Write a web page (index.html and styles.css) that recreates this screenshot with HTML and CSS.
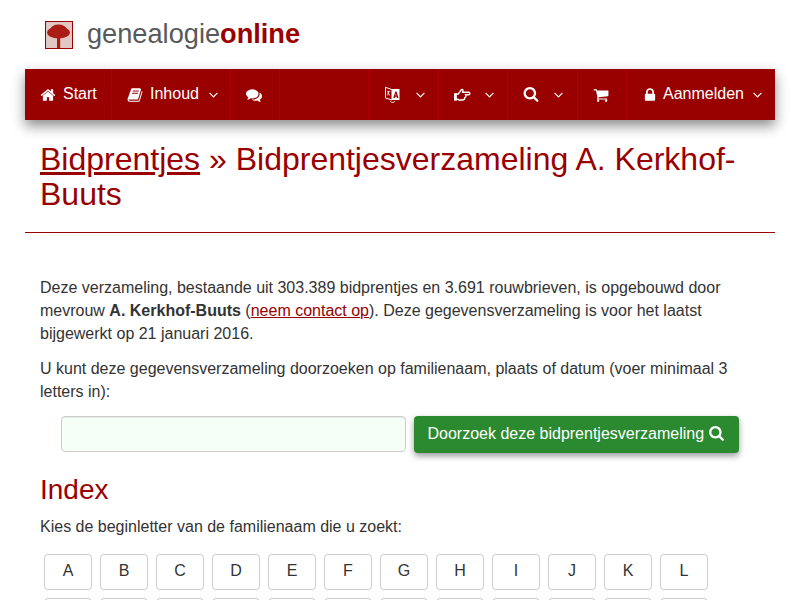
FILE: index.html
```html
<!DOCTYPE html>
<html lang="nl">
<head>
<meta charset="utf-8">
<title>Bidprentjes</title>
<link rel="stylesheet" href="styles.css">
</head>
<body>
<svg class="defs" width="0" height="0">
  <symbol id="i-search" viewBox="0 0 1664 1792"><path d="M1152 704q0-185-131.500-316.500t-316.500-131.500-316.500 131.500-131.500 316.500 131.500 316.500 316.500 131.500 316.500-131.500 131.500-316.500zm512 832q0 52-38 90t-90 38q-54 0-90-38l-343-342q-179 124-399 124-143 0-273.500-55.500t-225-150-150-225-55.500-273.500 55.500-273.500 150-225 225-150 273.500-55.500 273.500 55.500 225 150 150 225 55.500 273.500q0 220-124 399l343 343q37 37 37 90z"/></symbol>
  <symbol id="i-chev" viewBox="0 0 9 5.500"><path d="M.6.7 4.500 4.600 8.400.7" fill="none" stroke="currentColor" stroke-width="1.200"/></symbol>
</svg>
<div class="page">
  <header class="brand">
    <svg class="logo" viewBox="0 0 28 28" aria-hidden="true">
      <filter id="soft"><feGaussianBlur stdDeviation=".7"/></filter>
      <rect width="28" height="28" fill="#e2c8c4"/>
      <g fill="#ab1e14" filter="url(#soft)"><ellipse cx="13.500" cy="11.500" rx="11.500" ry="6"/><ellipse cx="13.500" cy="8.500" rx="8" ry="5"/><path d="M12 15h3.200v12H12z"/></g>
      <rect x=".5" y=".5" width="27" height="27" fill="none" stroke="#990000"/>
    </svg>
    <span class="brand-name">genealogie<b>online</b></span>
  </header>
  <nav class="nav">
    <a class="item w-start"><svg class="ic" viewBox="0 0 1792 1792"><path d="M1472 992v480q0 26-19 45t-45 19h-384v-384h-256v384h-384q-26 0-45-19t-19-45v-480q0-1 .5-3t.5-3l575-474 575 474q1 2 1 6zm223-69l-62 74q-8 9-21 11h-3q-13 0-21-7l-692-577-692 577q-12 8-24 7-13-2-21-11l-62-74q-8-10-7-23.500t11-21.500l719-599q32-26 76-26t76 26l244 204v-195q0-14 9-23t23-9h192q14 0 23 9t9 23v408l219 182q10 8 11 21.500t-7 23.500z"/></svg><span>Start</span></a>
    <a class="item w-inhoud"><svg class="ic" viewBox="0 0 1792 1792"><path d="M1703 478q40 57 18 129l-275 906q-19 64-76.500 107.500t-122.500 43.500h-923q-77 0-148.500-53.500t-99.500-131.500q-24-67-2-127 0-4 3-27t4-37q1-8-3-21.500t-3-19.500q2-11 8-21t16.500-23.500 16.500-23.500q23-38 45-91.500t30-91.500q3-10 .5-30t-.5-28q3-11 17-28t17-23q21-36 42-92t25-90q1-9-2.500-32t.5-28q4-13 22-30.500t22-22.500q19-26 42.500-84.500t27.500-96.500q1-8-3-25.500t-2-26.500q2-8 9-18t18-23 17-21q8-12 16.500-30.500t15-35 16-36 19.500-32 26.500-23.500 36-11.500 47.500 5.500l-1 3q38-9 51-9h761q74 0 114 56t18 130l-274 906q-36 119-71.500 153.500t-128.500 34.500h-869q-27 0-38 15-11 16-1 43 24 70 144 70h923q29 0 56-15.500t35-41.500l300-987q7-22 5-57 38 15 59 43zm-1064 2q-4 13 2 22.500t20 9.500h608q13 0 25.500-9.500t16.500-22.500l21-64q4-13-2-22.500t-20-9.500h-608q-13 0-25.500 9.500t-16.500 22.500zm-83 256q-4 13 2 22.500t20 9.500h608q13 0 25.500-9.500t16.500-22.500l21-64q4-13-2-22.500t-20-9.500h-608q-13 0-25.500 9.500t-16.500 22.500z"/></svg><span>Inhoud</span><svg class="chev"><use href="#i-chev"/></svg></a>
    <a class="item w-chat"><svg class="ic" viewBox="0 0 1792 1792"><path d="M1408 768q0 139-94 257t-256.500 186.500-353.500 68.500q-86 0-176-16-124 88-278 128-36 9-86 16h-3q-11 0-20.500-8t-11.500-21q-1-3-1-6.500t.5-6.500 2-6l2.500-5 3.500-5.500 4-5 4.500-5 4-4.500q5-6 23-25t26-29.500 22.500-29 25-38.500 20.500-44q-124-72-195-177t-71-224q0-139 94-257t256.500-186.500 353.500-68.500 353.500 68.500 256.500 186.500 94 257zm384 256q0 120-71 224.500t-195 176.500q10 24 20.500 44t25 38.500 22.500 29 26 29.500 23 25q1 1 4 4.500t4.500 5 4 5 3.500 5.500l2.500 5 2 6 .5 6.500-1 6.500q-3 14-13 22t-22 7q-50-7-86-16-154-40-278-128-90 16-176 16-271 0-472-132 58 4 88 4 161 0 309-45t264-129q125-92 192-212t67-254q0-77-23-152 129 71 204 178t75 230z"/></svg></a>
    <div class="spacer"></div>
    <a class="item w-lang"><svg class="ic lang" viewBox="0 0 16 17"><path d="M1.500 1.300 8 3.600V14L1.500 12z" fill="none" stroke="#fff"/><path fill-rule="evenodd" d="M8 3h7.500v11H8zM11.300 5.500 9.300 12h1.500l.3-1.300h1.500l.4 1.300h1.500l-2-6.500zM11.900 7.300l.4 2.100h-.9z"/><path d="M3 5.800h3.200M4.700 5l-1 4.500M3.800 7.200l2.200 2M6 15l1.500 1.300h2.500l1-1.300" fill="none" stroke="#fff" stroke-width=".8"/></svg><svg class="chev"><use href="#i-chev"/></svg></a>
    <a class="item w-hand"><svg class="ic hand" viewBox="0 0 18 14"><path d="M1 6h3.500l3-4.300c.8-1 2.100-.6 2 .7L9.200 4h6.300c1.700 0 1.700 2.700 0 2.700H12.300c.5 1.500 0 2.800-1 3.400 0 1.500-1.200 2.200-2.500 2.200H5.800c-.7 0-1.200-.5-1.800-.8H1z" fill="none" stroke="#fff" stroke-width="1.500"/><path d="M0 5.500h3V13H0z"/></svg><svg class="chev"><use href="#i-chev"/></svg></a>
    <a class="item w-search"><svg class="ic"><use href="#i-search"/></svg><svg class="chev"><use href="#i-chev"/></svg></a>
    <a class="item w-cart"><svg class="ic" viewBox="0 0 1792 1792"><path d="M704 1536q0 52-38 90t-90 38-90-38-38-90 38-90 90-38 90 38 38 90zm896 0q0 52-38 90t-90 38-90-38-38-90 38-90 90-38 90 38 38 90zm128-1088v512q0 24-16.500 42.500t-40.500 21.500l-1044 122q13 60 13 70 0 16-24 64h920q26 0 45 19t19 45-19 45-45 19h-1024q-26 0-45-19t-19-45q0-11 8-31.500t16-36 21.500-40 15.500-29.500l-177-823h-204q-26 0-45-19t-19-45 19-45 45-19h256q16 0 28.500 6.500t19.500 15.500 13 24.500 8 26 5.500 29.500 4.500 26h1201q26 0 45 19t19 45z"/></svg></a>
    <a class="item w-login"><svg class="ic lock" viewBox="0 0 1792 1792"><path d="M640 768h512v-192q0-106-75-181t-181-75-181 75-75 181v192zm832 96v576q0 40-28 68t-68 28h-960q-40 0-68-28t-28-68v-576q0-40 28-68t68-28h32v-192q0-184 132-316t316-132 316 132 132 316v192h32q40 0 68 28t28 68z"/></svg><span>Aanmelden</span><svg class="chev"><use href="#i-chev"/></svg></a>
  </nav>
  <main class="content">
    <h1 class="title"><a href="#">Bidprentjes</a> » Bidprentjesverzameling A. Kerkhof-Buuts</h1>
    <p>Deze verzameling, bestaande uit 303.389 bidprentjes en 3.691 rouwbrieven, is opgebouwd door mevrouw <b>A. Kerkhof-Buuts</b> (<a href="#">neem contact op</a>). Deze gegevensverzameling is voor het laatst bijgewerkt op 21 januari 2016.</p>
    <p>U kunt deze gegevensverzameling doorzoeken op familienaam, plaats of datum (voer minimaal 3 letters in):</p>
    <form class="search">
      <input class="search-input" type="text">
      <button class="search-btn" type="button">Doorzoek deze bidprentjesverzameling <svg class="btn-ic"><use href="#i-search"/></svg></button>
    </form>
    <h2 class="sub">Index</h2>
    <p>Kies de beginletter van de familienaam die u zoekt:</p>
    <div class="letters">
      <a>A</a><a>B</a><a>C</a><a>D</a><a>E</a><a>F</a><a>G</a><a>H</a><a>I</a><a>J</a><a>K</a><a>L</a>
      <a>M</a><a>N</a><a>O</a><a>P</a><a>Q</a><a>R</a><a>S</a><a>T</a><a>U</a><a>V</a><a>W</a><a>X</a>
    </div>
  </main>
</div>
</body>
</html>
```
FILE: styles.css
```css
* { box-sizing: border-box; }
html { height: 600px; overflow: hidden; }
body {
  margin: 0;
  height: 600px;
  overflow: hidden;
  font: 16px/22.857px "Liberation Sans", Arial, sans-serif;
  color: #333;
  background: #fff;
}
.defs { position: absolute; }
.page { width: 750px; margin: 0 auto; }
a { color: #990000; }

.brand { height: 69px; display: flex; align-items: center; gap: 14px; padding-left: 20px; }
.logo { width: 28px; height: 28px; display: block; flex: none; }
.brand-name { font-size: 27.200px; color: #58595b; line-height: 30px; margin-bottom: 2px; }
.brand-name b { color: #990000; }

.nav {
  display: flex;
  height: 51px;
  background: #990000;
  color: #fff;
  box-shadow: 0 6px 12px rgba(0, 0, 0, .45);
}
.item {
  display: flex;
  align-items: center;
  padding-left: 15px;
  color: #fff;
  border-right: 1px solid #ad0000;
  flex: none;
}
.w-start { width: 87px; }
.w-inhoud { width: 119px; }
.w-chat { width: 49px; }
.spacer { flex: 1; border-right: 1px solid #ad0000; }
.w-lang { width: 70px; }
.w-hand { width: 69px; }
.w-search { width: 70px; }
.w-cart { width: 49px; }
.w-login { width: 148px; border-right: 0; }
.ic { width: 16px; height: 16px; fill: #fff; flex: none; margin-right: 7px; }
.lang { height: 17px; }
.hand { width: 17px; height: 14px; }
.lock { margin-right: 5px; }
.chev { width: 9px; height: 6px; margin-left: 10px; flex: none; }
.w-lang .chev, .w-login .chev { margin-left: 9px; }
.w-hand .chev { margin-left: 7px; }
.w-search .chev { margin-left: 8px; }

.content { padding: 0 15px; }
.title {
  margin: 22px -15px 0;
  padding: 0 15px 20px;
  border-bottom: 1px solid #990000;
  font-size: 32px;
  font-weight: 400;
  line-height: 35.200px;
  color: #990000;
}
.content p { margin: 0 0 12px; }
.title + p { margin-top: 44px; }

.search { display: flex; margin: 12px 0 0 21px; gap: 8px; align-items: flex-start; }
.search-input {
  width: 345px;
  height: 36px;
  background: #f6fff6;
  border: 1px solid #ccc;
  border-radius: 4px;
  box-shadow: inset 0 1px 1px rgba(0, 0, 0, .075);
}
.search-btn {
  width: 325px;
  height: 37px;
  padding: 0 2px 0 0;
  font: inherit;
  color: #fff;
  background: #2b8a2f;
  border: 0;
  border-radius: 4px;
  box-shadow: 0 3px 6px rgba(0, 0, 0, .4);
}
.btn-ic { width: 15px; height: 16px; fill: #fff; vertical-align: -3px; }

.sub { margin: 20px 0 9px; font-size: 28px; font-weight: 400; line-height: 34px; color: #990000; }
.letters { display: grid; grid-template-columns: repeat(12, 48px); gap: 8px; margin: 15px 0 0 4px; }
.letters a {
  height: 36px;
  display: flex;
  align-items: center;
  justify-content: center;
  color: #333;
  border: 1px solid #ccc;
  border-radius: 4px;
}
```
